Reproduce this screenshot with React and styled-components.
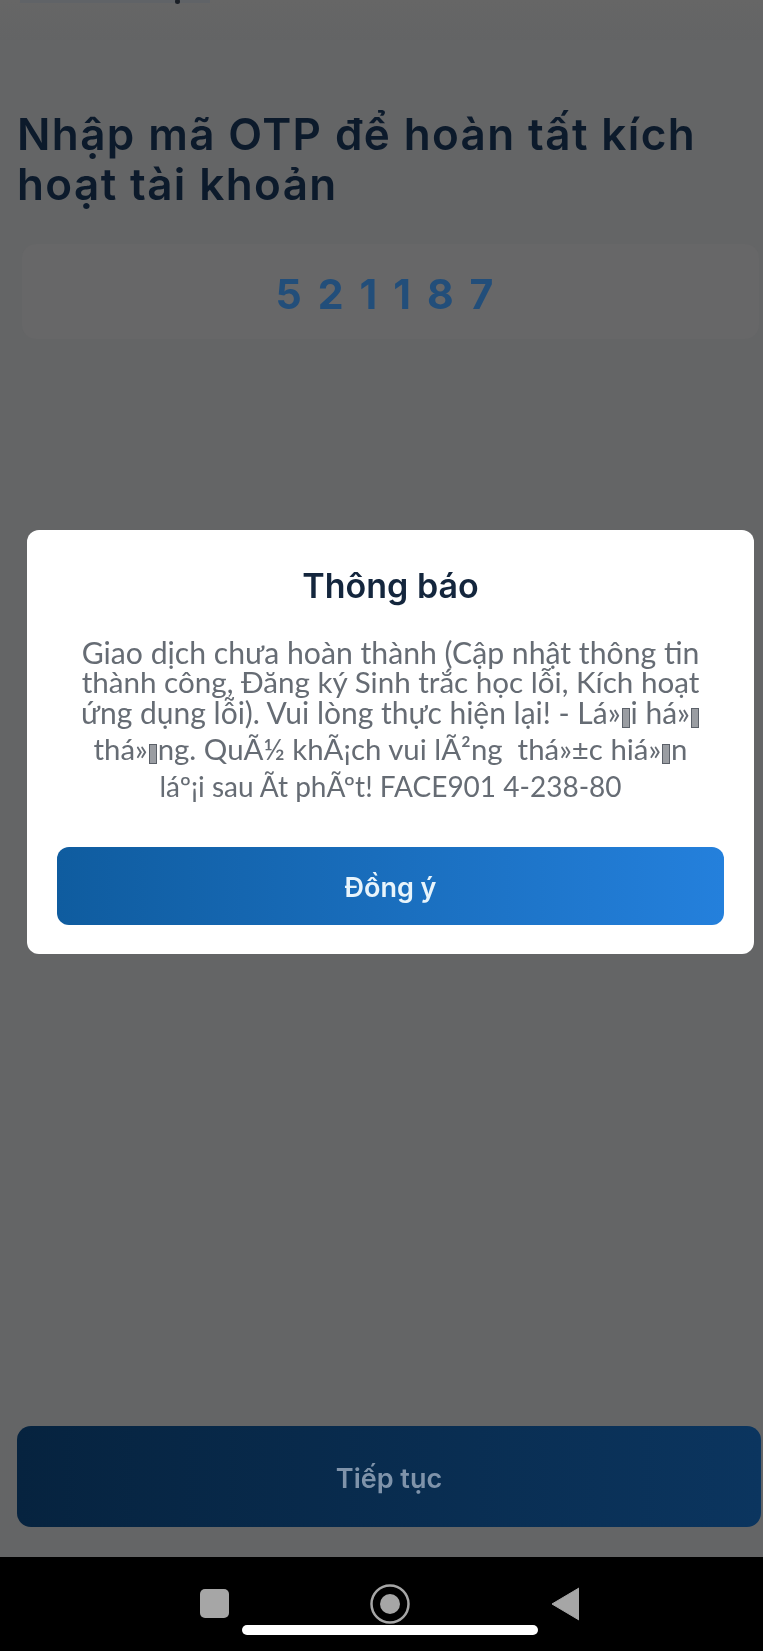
import React from 'react'
import styled, { createGlobalStyle } from 'styled-components'

const Global = createGlobalStyle`
  html, body { margin: 0; padding: 0; background: #000; }
  * { box-sizing: border-box; }
  body { font-family: "Lato", "Noto Sans", "Liberation Sans", sans-serif; }
`

const Phone = styled.div`
  position: relative;
  width: 763px;
  height: 1651px;
  display: flex;
  flex-direction: column;
  overflow: hidden;
  background: #000;
  filter: blur(0.6px);
`

const AppArea = styled.div`
  position: relative;
  height: 1557px;
  flex: none;
  display: flex;
  flex-direction: column;
  background: #646566;
`

const TopBar = styled.div`
  height: 40px;
  flex: none;
  padding-left: 20px;
  background: linear-gradient(180deg, #666666, #636465);
`

// bottom edge of the header title, cut off by the top of the screenshot
const ClippedTitle = styled.div`
  position: relative;
  width: 190px;
  height: 3px;
  background: #606367;

  &::after {
    content: '';
    position: absolute;
    left: 155px;
    top: -1px;
    width: 5px;
    height: 5px;
    border-radius: 50%;
    background: #1a1f26;
  }
`

const Content = styled.div`
  flex: 1;
  display: flex;
  flex-direction: column;
  padding: 69px 0 30px 17px;
`

const Heading = styled.h1`
  margin: 0;
  width: 700px;
  font-size: 44px;
  line-height: 50px;
  font-weight: 600;
  letter-spacing: 1.4px;
  font-family: "Inter", "Noto Sans", sans-serif;
  color: #0c1a2b;
`

const CodeBox = styled.div`
  margin: 35px 4px 0 5px;
  height: 95px;
  padding: 5px 0 0 4px;
  border-radius: 14px;
  background: #676768;
  display: flex;
  align-items: center;
  justify-content: center;
  font-family: "Inter", "Noto Sans", sans-serif;
  font-size: 41px;
  font-weight: 700;
  letter-spacing: 16px;
  color: #224e7a;
`

const ContinueButton = styled.div`
  margin: auto 2px 0 0;
  height: 101px;
  padding-top: 3px;
  border-radius: 14px;
  background: linear-gradient(90deg, #06233f, #0b355f);
  display: flex;
  align-items: center;
  justify-content: center;
  font-family: "Inter", "Noto Sans", sans-serif;
  font-size: 27px;
  font-weight: 600;
  color: #7f93aa;
`

const Scrim = styled.div`
  position: absolute;
  inset: 0;
  padding: 530px 9px 0 27px;
`

const Modal = styled.div`
  height: 424px;
  background: #fff;
  border-radius: 12px;
  padding: 34px 30px 0;
  display: flex;
  flex-direction: column;
  align-items: center;
`

const ModalTitle = styled.h2`
  margin: 0;
  font-size: 34px;
  line-height: 44px;
  font-weight: 600;
  font-family: "Inter", "Noto Sans", sans-serif;
  color: #14263d;
`

const ModalText = styled.p`
  margin: 29px 0 0;
  width: 100%;
  text-align: center;
  line-height: 30px;
  color: #666c74;
`

const TextLine = styled.span`
  display: block;
  white-space: pre;
  font-size: ${(p) => p.$size}px;
  margin-top: ${(p) => p.$gap || 0}px;
`

const Tofu = styled.span`
  display: inline-block;
  width: 8px;
  height: 20px;
  margin: 0 1px;
  vertical-align: -4px;
  border: 1.5px solid #5b6068;
  background: #9a9da2;
`

const AgreeButton = styled.div`
  margin-top: auto;
  margin-bottom: 29px;
  width: 100%;
  height: 78px;
  padding-top: 2px;
  flex: none;
  border-radius: 12px;
  background: linear-gradient(90deg, #0f5c9f, #2480dc);
  display: flex;
  align-items: center;
  justify-content: center;
  font-family: "Inter", "Noto Sans", sans-serif;
  font-size: 27px;
  font-weight: 600;
  color: #e8f4fb;
`

const NavBar = styled.div`
  position: relative;
  flex: 1;
  display: flex;
  align-items: center;
  justify-content: center;
  gap: 141px;
  padding: 0 0 1px 16px;
`

const HomeIndicator = styled.div`
  position: absolute;
  left: 242px;
  top: 68px;
  width: 296px;
  height: 10px;
  border-radius: 5px;
  background: #fff;
`

const Icon = styled.svg`
  display: block;
  flex: none;
  fill: #a6a6a6;
`

const App = () => (
  <Phone>
    <Global />
    <AppArea>
      <TopBar>
        <ClippedTitle />
      </TopBar>
      <Content>
        <Heading>Nhập mã OTP để hoàn tất kích hoạt tài khoản</Heading>
        <CodeBox>521187</CodeBox>
        <ContinueButton>Tiếp tục</ContinueButton>
      </Content>
      <Scrim>
        <Modal>
          <ModalTitle>Thông báo</ModalTitle>
          <ModalText>
            <TextLine $size={30.2}>Giao dịch chưa hoàn thành (Cập nhật thông tin</TextLine>
            <TextLine $size={29.6}>thành công, Đăng ký Sinh trắc học lỗi, Kích hoạt</TextLine>
            <TextLine $size={30}>ứng dụng lỗi). Vui lòng thực hiện lại! - Lá»<Tofu />i há»<Tofu /></TextLine>
            <TextLine $size={29.4} $gap={6}>thá»<Tofu />ng. QuÃ½ khÃ¡ch vui lÃ²ng  thá»±c hiá»<Tofu />n</TextLine>
            <TextLine $size={28} $gap={7}>láº¡i sau Ãt phÃºt! FACE901 4-238-80</TextLine>
          </ModalText>
          <AgreeButton>Đồng ý</AgreeButton>
        </Modal>
      </Scrim>
    </AppArea>
    <NavBar>
      <Icon width="29" height="29" viewBox="0 0 29 29">
        <rect width="29" height="29" rx="5" />
      </Icon>
      <Icon width="40" height="40" viewBox="0 0 40 40">
        <circle cx="20" cy="20" r="18.5" fill="none" stroke="#a6a6a6" strokeWidth="2.5" />
        <circle cx="20" cy="20" r="10" />
      </Icon>
      <Icon width="28" height="34" viewBox="0 0 28 34">
        <path d="M28 1V33L1 17Z" stroke="#a6a6a6" strokeWidth="1" strokeLinejoin="round" />
      </Icon>
      <HomeIndicator />
    </NavBar>
  </Phone>
)

export default App
